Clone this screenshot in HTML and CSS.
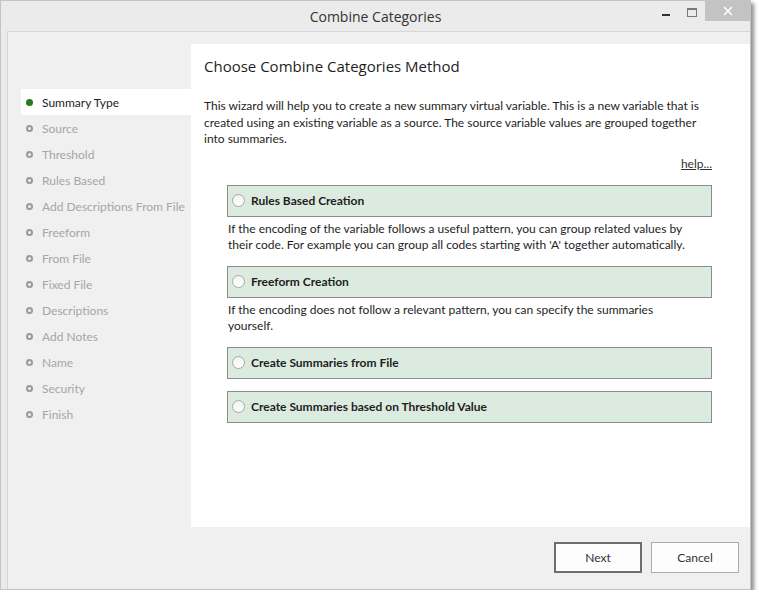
FILE: index.html
```html
<!DOCTYPE html>
<html lang="en">
<head>
    <meta charset="UTF-8">
    <title>Combine Categories</title>
    <link rel="stylesheet" href="styles.css">
</head>
<body>
    <div class="window">
        <div class="titlebar">
            <span class="title">Combine Categories</span>
            <div class="controls">
                <span class="ctl minimize"></span>
                <span class="ctl maximize"></span>
                <span class="ctl close">
                    <svg width="10" height="10" viewBox="0 0 10 10"><path d="M1 1 L9 9 M9 1 L1 9" stroke="#fff" stroke-width="1.6"/></svg>
                </span>
            </div>
        </div>
        <div class="client">
            <ul class="steps">
                <li class="step active"><span class="dot"></span>Summary Type</li>
                <li class="step"><span class="dot"></span>Source</li>
                <li class="step"><span class="dot"></span>Threshold</li>
                <li class="step"><span class="dot"></span>Rules Based</li>
                <li class="step"><span class="dot"></span>Add Descriptions From File</li>
                <li class="step"><span class="dot"></span>Freeform</li>
                <li class="step"><span class="dot"></span>From File</li>
                <li class="step"><span class="dot"></span>Fixed File</li>
                <li class="step"><span class="dot"></span>Descriptions</li>
                <li class="step"><span class="dot"></span>Add Notes</li>
                <li class="step"><span class="dot"></span>Name</li>
                <li class="step"><span class="dot"></span>Security</li>
                <li class="step"><span class="dot"></span>Finish</li>
            </ul>
            <main class="page">
                <h1>Choose Combine Categories Method</h1>
                <p class="intro">This wizard will help you to create a new summary virtual variable. This is a new variable that is created using an existing variable as a source. The source variable values are grouped together into summaries.</p>
                <div class="help"><a href="#">help...</a></div>
                <div class="options">
                    <label class="option"><span class="radio"></span>Rules Based Creation</label>
                    <p class="option-note">If the encoding of the variable follows a useful pattern, you can group related values by their code. For example you can group all codes starting with 'A' together automatically.</p>
                    <label class="option"><span class="radio"></span>Freeform Creation</label>
                    <p class="option-note">If the encoding does not follow a relevant pattern, you can specify the summaries yourself.</p>
                    <label class="option"><span class="radio"></span>Create Summaries from File</label>
                    <label class="option"><span class="radio"></span>Create Summaries based on Threshold Value</label>
                </div>
            </main>
            <div class="footer">
                <button class="btn default">Next</button>
                <button class="btn">Cancel</button>
            </div>
        </div>
    </div>
</body>
</html>
```

FILE: styles.css
```css
body {
    margin: 0;
    background: #fff;
    font-family: "Lato", "Open Sans", sans-serif;
    color: #1e1e1e;
}

.window {
    width: 749px;
    height: 588px;
    border: 1px solid #c4c4c4;
    background: #ebebeb;
    display: flex;
    flex-direction: column;
    box-shadow: 3px 3px 4px rgba(0, 0, 0, 0.45);
}

.titlebar {
    height: 30px;
    position: relative;
    display: flex;
    align-items: center;
    justify-content: center;
}

.title {
    font-family: "Open Sans", sans-serif;
    font-size: 14px;
    color: #333;
    margin-top: 1px;
}

.controls {
    position: absolute;
    top: 0;
    right: 0;
    display: flex;
    align-items: flex-start;
}

.ctl {
    display: block;
}

.minimize {
    width: 8px;
    height: 2px;
    background: #333;
    margin: 13px 17px 0 0;
}

.maximize {
    width: 8px;
    height: 6px;
    border: 1px solid #777;
    border-top-width: 2px;
    margin: 7px 8px 0 0;
}

.close {
    width: 45px;
    height: 20px;
    background: #c3c3c3;
    display: flex;
    align-items: center;
    justify-content: center;
}

.client {
    flex: 1;
    margin-left: 6px;
    border-left: 1px solid #d6d6d6;
    border-top: 1px solid #d6d6d6;
    background: #f0f0f0;
    display: grid;
    grid-template-columns: 183px 1fr;
    grid-template-rows: 1fr auto;
    padding-top: 12px;
}

.steps {
    list-style: none;
    margin: 0;
    padding: 45px 0 0 13px;
    font-size: 12px;
}

.step {
    height: 26px;
    display: flex;
    align-items: center;
    color: #a6a6a6;
}

.step.active {
    background: #fff;
    color: #1e1e1e;
}

.dot {
    width: 3px;
    height: 3px;
    border: 2px solid #9a9a9a;
    border-radius: 50%;
    margin: 0 9px 0 5px;
}

.step.active .dot {
    width: 7px;
    height: 7px;
    border: none;
    background: #237a23;
}

.page {
    background: #fff;
    padding: 11px 38px 0 13px;
}

h1 {
    font-family: "Open Sans", sans-serif;
    font-weight: normal;
    font-size: 15px;
    line-height: 22px;
    margin: 0 0 21px;
}

.intro {
    font-size: 12px;
    line-height: 16.5px;
    margin: 0;
}

.help {
    text-align: right;
    font-size: 12px;
    line-height: 16px;
    margin-top: 8px;
}

.help a {
    color: #333;
}

.options {
    margin: 13px 0 0 23px;
}

.option {
    display: flex;
    align-items: center;
    height: 30px;
    border: 1px solid #8c8c8c;
    background: #dcebe0;
    font-weight: bold;
    font-size: 12px;
    margin-bottom: 12px;
}

.radio {
    width: 11px;
    height: 11px;
    border: 1px solid #a8a8a8;
    border-radius: 50%;
    background: linear-gradient(#f2f2f2, #fff);
    margin: 0 6px 0 4px;
}

.option-note {
    font-size: 12px;
    line-height: 16.5px;
    margin: -8px 21px 12px 1px;
}

.footer {
    grid-column: 2;
    display: flex;
    justify-content: flex-end;
    gap: 9px;
    padding: 15px 11px 16px 0;
}

.btn {
    width: 88px;
    height: 31px;
    background: #fdfdfd;
    border: 1px solid #adadad;
    font-family: "Lato", sans-serif;
    font-size: 12px;
    color: #333;
}

.btn.default {
    border: 2px solid #6e6e6e;
}
```
